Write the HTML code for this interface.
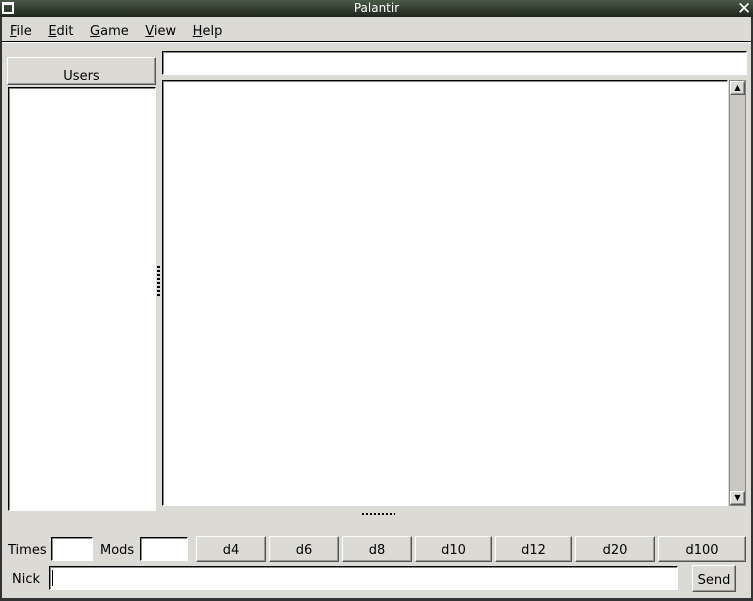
<!DOCTYPE html><html><head><style>
*{margin:0;padding:0;box-sizing:border-box}
body{width:753px;height:601px;background:#dcdad5;font-family:"DejaVu Sans","Liberation Sans",sans-serif;font-size:13px;color:#000;position:relative;overflow:hidden}
.a{position:absolute}
.in{background:#fff;border:1px solid;border-color:#000 #fff #fff #000;box-shadow:inset 1px 1px 0 #888}
.bt{background:#dcdad5;border:1px solid;border-color:#fff #555 #555 #fff;box-shadow:inset -1px -1px 0 #9a9893;text-align:center;line-height:28px}
u{text-decoration:underline}
</style></head><body>
<div class="a" style="left:0;top:0;width:753px;height:17px;background:linear-gradient(#4b5a48,#2e3a2c 60%,#1e261d);color:#fff;text-align:center;font-size:12px;line-height:17px">Palantir</div>
<div class="a" style="left:2px;top:2px;width:12px;height:12px;border:2px solid #fff;border-top-width:3px"></div>
<div class="a" style="left:737px;top:-1px;color:#fff;font-size:17px">✕</div>
<div class="a" style="left:0;top:17px;width:2px;height:584px;background:#333"></div>
<div class="a" style="left:751px;top:17px;width:2px;height:584px;background:#333"></div>
<div class="a" style="left:0;top:598px;width:753px;height:3px;background:#333"></div>
<div class="a" style="left:10px;top:24px;font-size:13px;word-spacing:0"><u>F</u>ile&nbsp;&nbsp;&nbsp;&nbsp;<u>E</u>dit&nbsp;&nbsp;&nbsp;&nbsp;<u>G</u>ame&nbsp;&nbsp;&nbsp;&nbsp;<u>V</u>iew&nbsp;&nbsp;&nbsp;&nbsp;<u>H</u>elp</div>
<div class="a" style="left:2px;top:41px;width:749px;height:1px;background:#000"></div>
<div class="a" style="left:2px;top:42px;width:749px;height:1px;background:#fff"></div>
<div class="a bt" style="left:7px;top:57px;width:149px;height:28px;line-height:38px">Users</div>
<div class="a in" style="left:8px;top:87px;width:148px;height:424px"></div>
<div class="a in" style="left:162px;top:51px;width:585px;height:24px"></div>
<div class="a in" style="left:162px;top:80px;width:566px;height:426px"></div>
<div class="a" style="left:729px;top:80px;width:17px;height:426px;background:#c9c7c2;border:1px solid #888"></div>
<div class="a bt" style="left:730px;top:81px;width:15px;height:14px;font-size:8px;line-height:12px">▲</div>
<div class="a bt" style="left:730px;top:491px;width:15px;height:14px;font-size:8px;line-height:12px">▼</div>
<div class="a" style="left:157px;top:266px;width:3px;height:32px;background:repeating-linear-gradient(#000 0 2px,transparent 2px 4px)"></div>
<div class="a" style="left:362px;top:513px;width:33px;height:2px;background:repeating-linear-gradient(90deg,#000 0 2px,transparent 2px 4px)"></div>
<div class="a" style="left:8px;top:543px">Times</div>
<div class="a in" style="left:51px;top:537px;width:42px;height:24px"></div>
<div class="a" style="left:100px;top:543px">Mods</div>
<div class="a in" style="left:140px;top:537px;width:48px;height:24px"></div>
<div class="a bt" style="left:196px;top:536px;width:70px;height:26px">d4</div>
<div class="a bt" style="left:269px;top:536px;width:70px;height:26px">d6</div>
<div class="a bt" style="left:342px;top:536px;width:70px;height:26px">d8</div>
<div class="a bt" style="left:415px;top:536px;width:77px;height:26px">d10</div>
<div class="a bt" style="left:495px;top:536px;width:77px;height:26px">d12</div>
<div class="a bt" style="left:575px;top:536px;width:80px;height:26px">d20</div>
<div class="a bt" style="left:658px;top:536px;width:88px;height:26px">d100</div>
<div class="a" style="left:12px;top:572px">Nick</div>
<div class="a in" style="left:49px;top:566px;width:629px;height:24px"><div style="position:absolute;left:2px;top:3px;width:1px;height:16px;background:#000"></div></div>
<div class="a bt" style="left:692px;top:565px;width:44px;height:27px;line-height:29px">Send</div>
</body></html>
